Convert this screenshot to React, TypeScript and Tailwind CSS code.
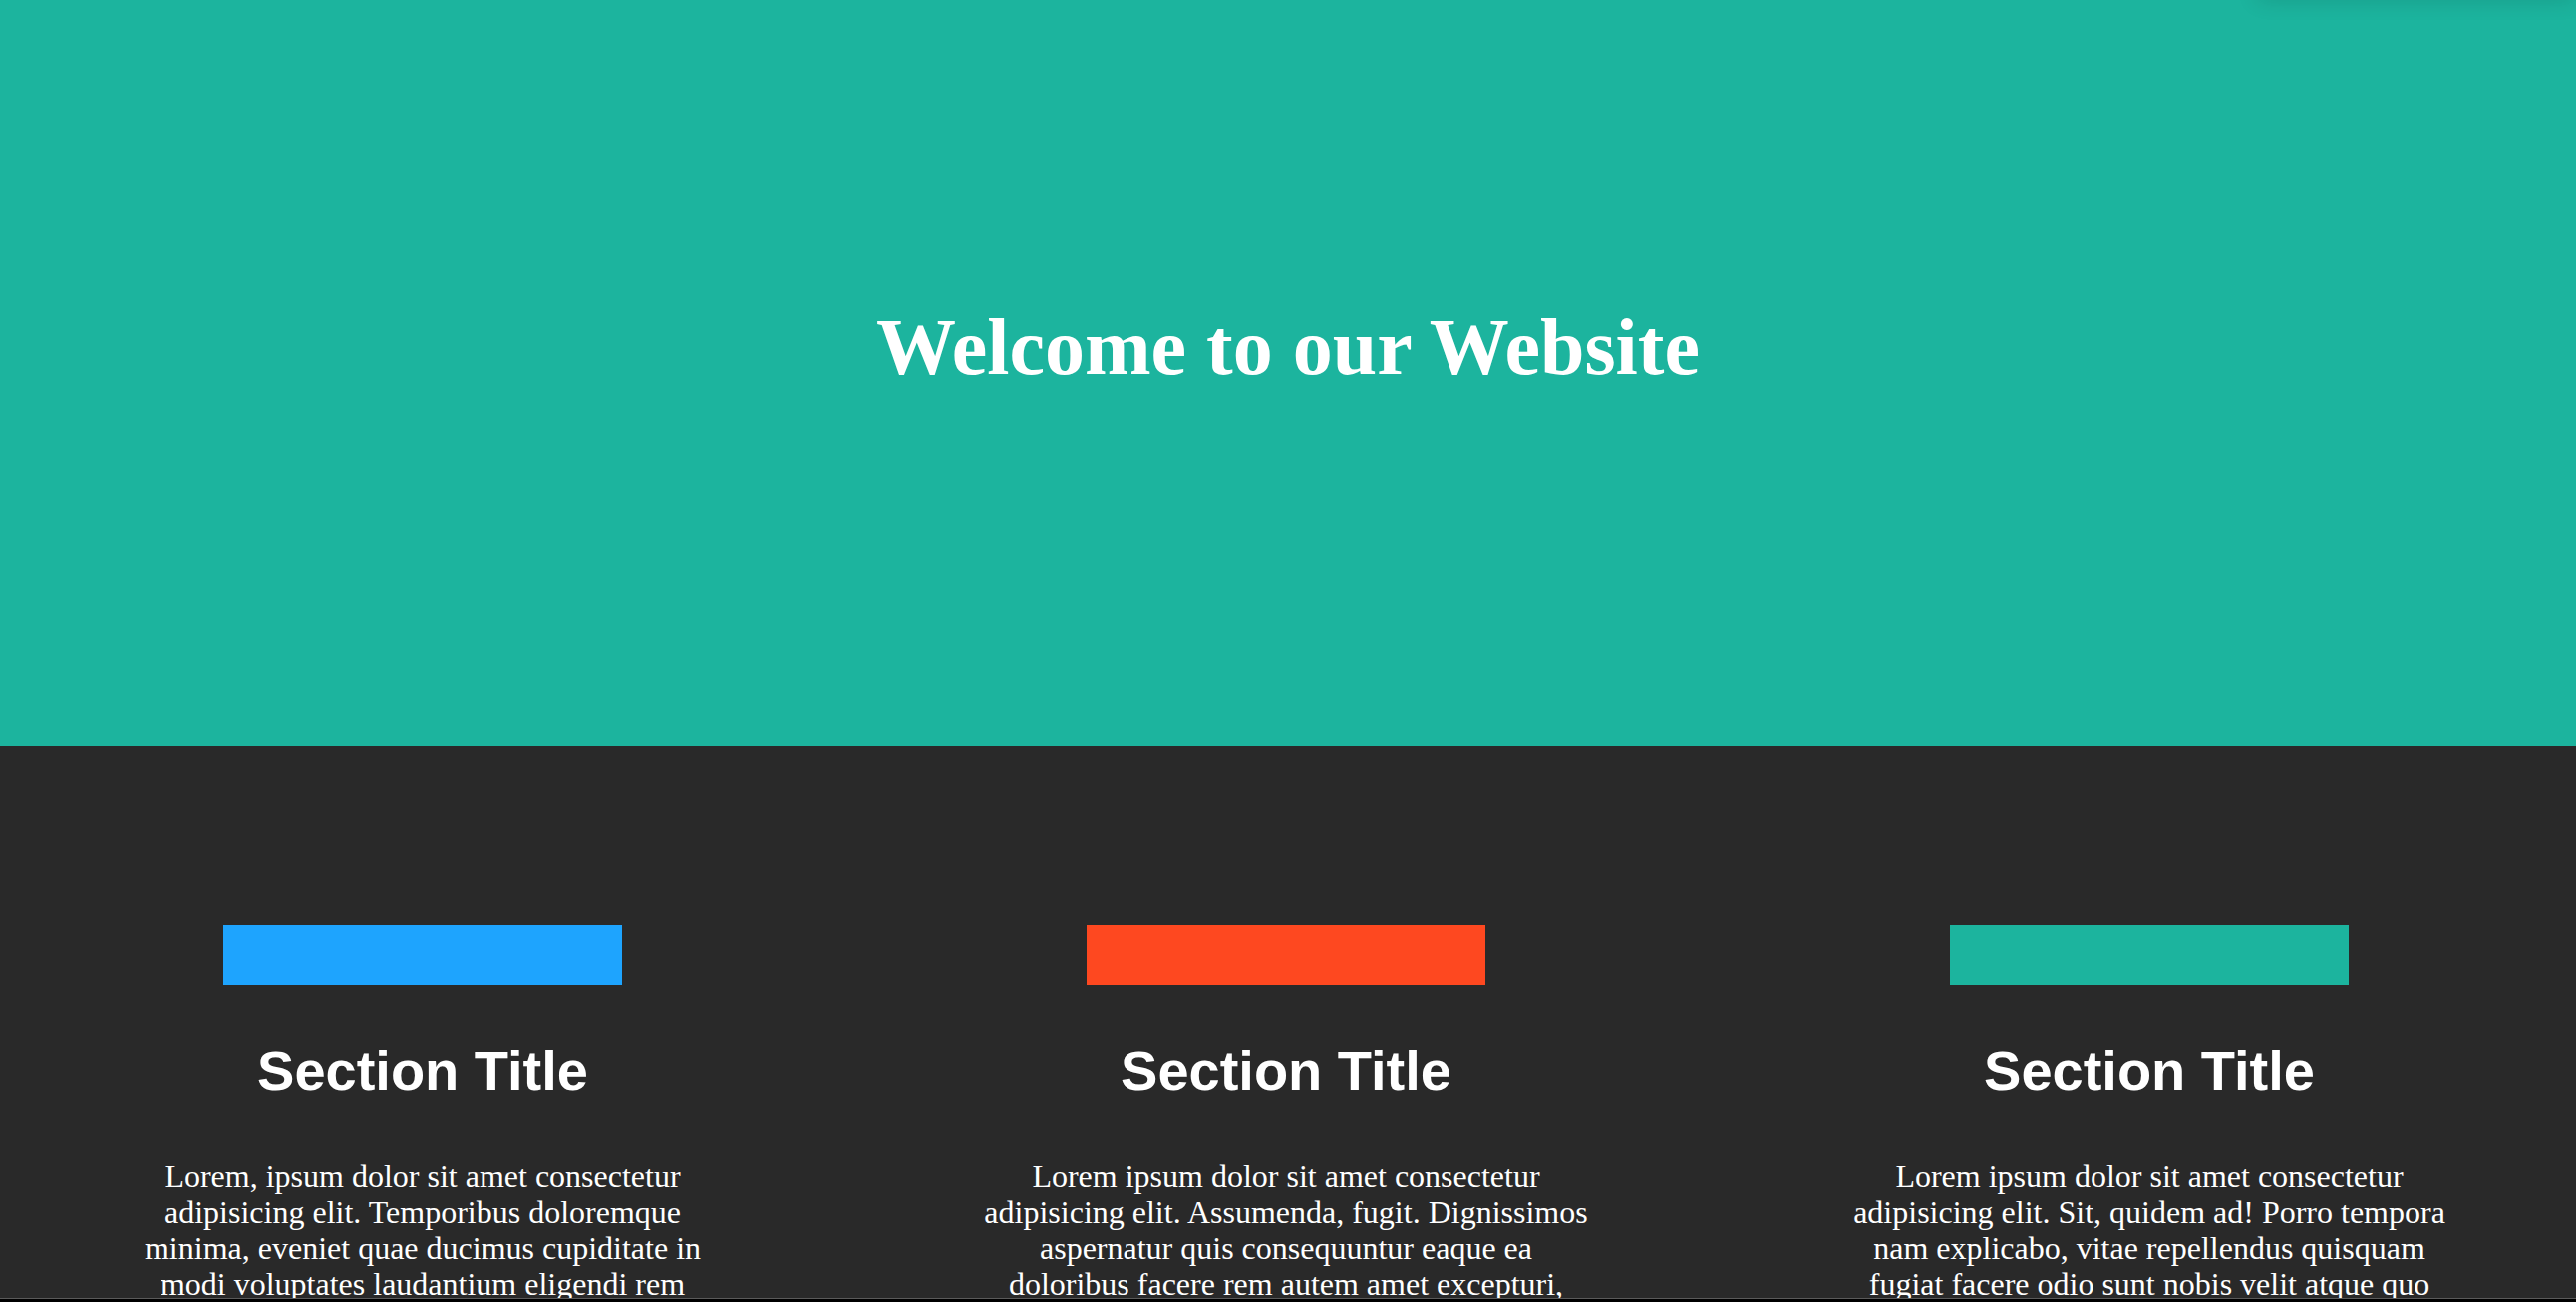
import React from "react";

interface Section {
  color: string;
  text: string;
}

const sections: Section[] = [
  {
    color: "bg-[#1ea4fe]",
    text: "Lorem, ipsum dolor sit amet consectetur adipisicing elit. Temporibus doloremque minima, eveniet quae ducimus cupiditate in modi voluptates laudantium eligendi rem repellendus quia, dolores voluptatum.",
  },
  {
    color: "bg-[#fe4820]",
    text: "Lorem ipsum dolor sit amet consectetur adipisicing elit. Assumenda, fugit. Dignissimos aspernatur quis consequuntur eaque ea doloribus facere rem autem amet excepturi, officiis nisi repellat.",
  },
  {
    color: "bg-[#1cb49e]",
    text: "Lorem ipsum dolor sit amet consectetur adipisicing elit. Sit, quidem ad! Porro tempora nam explicabo, vitae repellendus quisquam fugiat facere odio sunt nobis velit atque quo eligendi.",
  },
];

function App() {
  return (
    <div className="h-[1306px] w-full flex flex-col overflow-hidden bg-[#292929]">
      <div className="flex-1 overflow-hidden">
        {/* Hero */}
        <header className="relative h-[748px] bg-[#1cb49e] flex items-center justify-center pb-[52px]">
          <div className="absolute -top-[20px] right-0 w-[320px] h-[20px] shadow-[0_0_22px_rgba(0,0,0,0.14)]"></div>
          <h1 className="text-white text-[80px] leading-[92px] font-bold font-['Liberation_Serif',serif]">
            Welcome to our Website
          </h1>
        </header>

        {/* Sections */}
        <main className="grid grid-cols-3 gap-[66px] pl-6 pr-[28px] pt-[180px]">
          {sections.map((section, index) => (
            <section key={index} className="flex flex-col items-center text-center">
              <div className={`w-[400px] h-[60px] ${section.color}`}></div>
              <h2 className="mt-[54px] text-white text-[56px] leading-[64px] font-bold font-['Liberation_Sans',Arial,sans-serif]">
                Section Title
              </h2>
              <p className="mt-[56px] max-w-[614px] text-white text-[32px] leading-[36px] font-['Liberation_Serif',serif]">
                {section.text}
              </p>
            </section>
          ))}
        </main>
      </div>

      {/* window edge */}
      <div className="h-[4px] border-t border-[#5a5a5a] bg-black"></div>
    </div>
  );
}

export default App;
